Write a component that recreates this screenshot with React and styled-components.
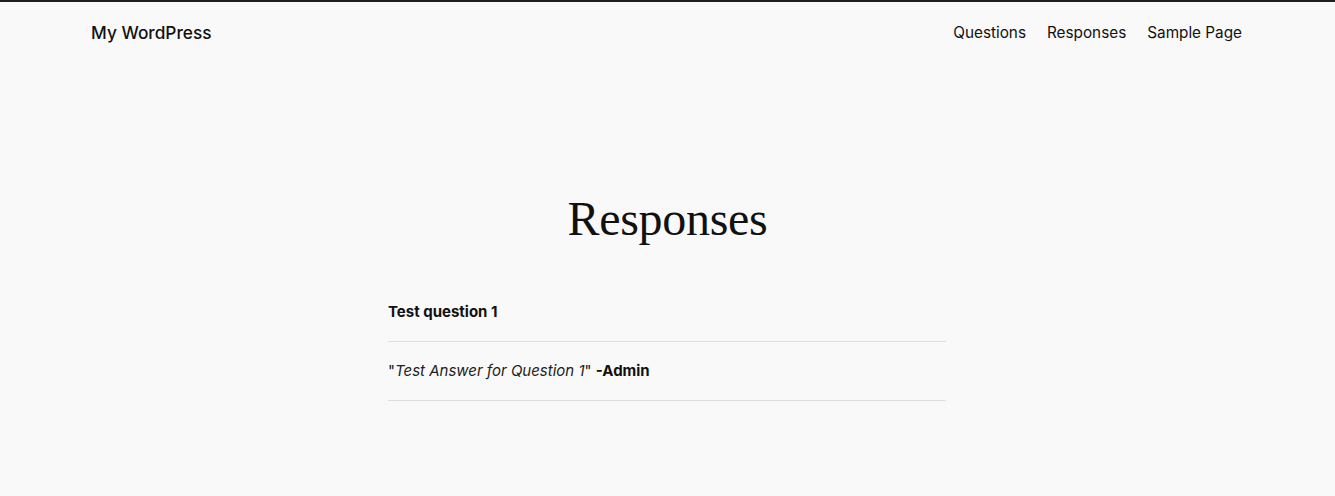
import React from "react";
import styled, { createGlobalStyle } from "styled-components";

const GlobalStyle = createGlobalStyle`
  html, body {
    margin: 0;
    padding: 0;
    background: #f9f9f9;
  }
  body {
    font-family: Inter, "Liberation Sans", sans-serif;
    color: #111111;
  }
`

const Page = styled.div`
  min-height: 496px;
  border-top: 2px solid #1e1e1e;
  box-sizing: border-box;
`

const Header = styled.header`
  display: flex;
  justify-content: space-between;
  align-items: center;
  padding: 21px 93px 0 91px;
  height: 20px;
`

const SiteTitle = styled.a`
  font-size: 17.3px;
  font-weight: 500;
  line-height: 20px;
  color: #111111;
  text-decoration: none;
`

const Nav = styled.nav`
  display: flex;
  gap: 21px;
`

const NavLink = styled.a`
  font-size: 15.3px;
  line-height: 20px;
  color: #111111;
  text-decoration: none;
`

const Main = styled.main`
  display: flex;
  flex-direction: column;
  align-items: center;
  padding-top: 146px;
`

const Title = styled.h1`
  margin: 0;
  font-family: "Liberation Serif", "DejaVu Serif", serif;
  font-weight: 400;
  font-size: 48px;
  line-height: 60px;
  letter-spacing: -0.3px;
  color: #111111;
`

const List = styled.section`
  width: 558px;
  margin-top: 51px;
  margin-left: -1px;
`

const Row = styled.div`
  font-size: 15px;
  line-height: 24px;
  padding: ${p => (p.$first ? "0 0 17px" : "17px 0 17px")};
  border-bottom: 1px solid #dedede;
`

const Question = styled.strong`
  font-weight: 700;
`

const Answer = styled.em`
  font-style: italic;
  color: #222222;
`

const Author = styled.strong`
  font-weight: 700;
`

export default function App() {
  return (
    <>
      <GlobalStyle />
      <Page>
        <Header>
          <SiteTitle href="#">My WordPress</SiteTitle>
          <Nav>
            <NavLink href="#">Questions</NavLink>
            <NavLink href="#">Responses</NavLink>
            <NavLink href="#">Sample Page</NavLink>
          </Nav>
        </Header>
        <Main>
          <Title>Responses</Title>
          <List>
            <Row $first>
              <Question>Test question 1</Question>
            </Row>
            <Row>
              "<Answer>Test Answer for Question 1</Answer>" <Author>-Admin</Author>
            </Row>
          </List>
        </Main>
      </Page>
    </>
  );
}
